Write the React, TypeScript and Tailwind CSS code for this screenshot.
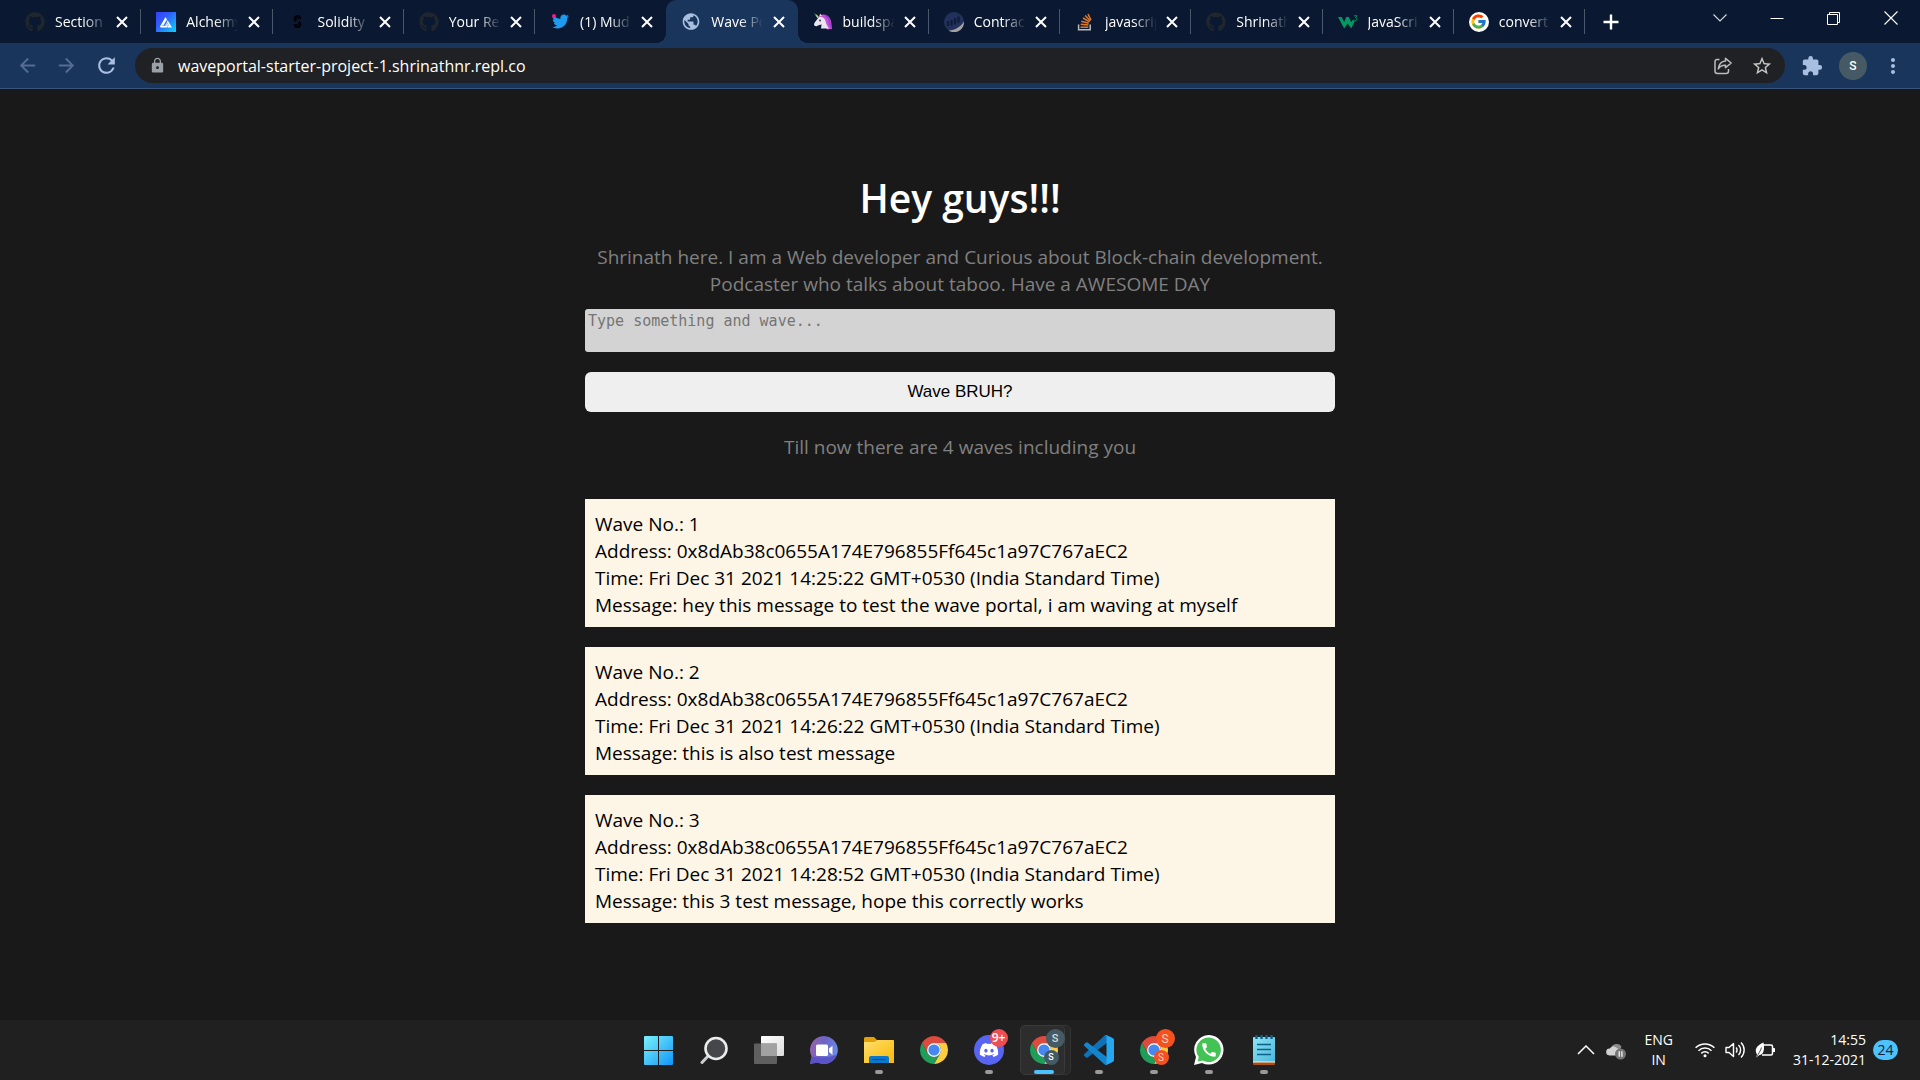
import React from 'react';
import { FaGithub, FaTwitter, FaDiscord } from 'react-icons/fa';
import { FcGoogle } from 'react-icons/fc';
import { SiSolidity } from 'react-icons/si';
import {
  MdArrowBack,
  MdArrowForward,
  MdCall,
  MdExtension,
  MdLock,
  MdMoreVert,
  MdPublic,
  MdRefresh,
  MdStarBorder,
} from 'react-icons/md';

/* ---------- Tab favicons ---------- */

const GithubMark = () => <FaGithub size={20} color="#1f262d" />;

const AlchemyMark = () => (
  <svg width="20" height="20" viewBox="0 0 20 20">
    <defs>
      <linearGradient id="alchemy" x1="0" y1="0" x2="1" y2="1">
        <stop offset="0" stopColor="#363ff9" />
        <stop offset="0.4" stopColor="#3060fb" />
        <stop offset="1" stopColor="#05d5ff" />
      </linearGradient>
    </defs>
    <rect width="20" height="20" fill="url(#alchemy)" />
    <path d="M9.500 5 11 7.400 7.300 13.600H5.800L4.500 15.300 4 14.500Z" fill="#fff" />
    <path d="M4.500 13.800h6.500v1.700H4.500Z" fill="#fff" />
    <path d="M11.600 8.200 16 15.500h-4.200l-1-1.700h2.200l-2.200-3.700Z" fill="#fff" />
    <path d="M10.800 10.500l1.900 3.200H8.900Z" fill="#dfe6ff" />
  </svg>
);

const UnicornMark = () => (
  <svg width="20" height="20" viewBox="0 0 20 20">
    <path d="M6.500 3.500C10 1.500 15 2.500 17 6.500c1.800 3.400 1.400 7 2 10.500l-5 .5-4-6L5 6Z" fill="#c94fd8" />
    <path d="M12 3.500c3 1 5 4.500 4.600 8l2 4" stroke="#8f3fd0" strokeWidth="1.400" fill="none" />
    <path d="M5.500 5.500C9 4 12 6 12.500 9c.4 3 2 5 3.500 7.500H8l.6-4C7 12.500 5.500 13 4 14c-1.500.6-3-.3-3-1.800C1.500 10 3.500 8.500 5.500 5.500Z" fill="#e9e6f0" />
    <path d="M1 1l4.800 4-1.300 1.500L1 1Z" fill="#35b4d8" />
    <path d="M2.500 2.800 3.600 2.600 5.800 5 4.700 6Z" fill="#f3c53b" />
    <path d="M7 1.500 9 4 6.500 4.500Z" fill="#e9e6f0" />
    <circle cx="7" cy="8.500" r="0.900" fill="#32233f" />
  </svg>
);

const EtherscanMark = () => (
  <svg width="20" height="20" viewBox="0 0 20 20">
    <circle cx="10" cy="10" r="10" fill="#22315c" />
    <path d="M4 9v5M7.500 8v5.500M11 6v6.500M14.500 4.500v6" stroke="#0d1d3a" strokeWidth="2.200" />
    <path d="M4.500 18.400C11 18.500 17 14.500 20 9.500c.3 6-4 10.500-10 10.500-2 0-4-.6-5.500-1.600Z" fill="#a3a3a3" />
  </svg>
);

const StackMark = () => (
  <svg width="20" height="20" viewBox="0 0 20 20">
    <path d="M3.600 12.500v5.200h11.600v-5.200" fill="none" stroke="#bcbbbb" strokeWidth="1.500" />
    <g stroke="#e07b28" strokeWidth="1.500">
      <path d="M5.500 15.200h7.800" />
      <path d="M5.700 12.200l7.700.9" />
      <path d="M6.300 9.200l7.400 2.100" />
      <path d="M8 6l6.500 3.900" />
      <path d="M10.200 3.600l5.200 5.500" />
      <path d="M13 2l3 6" />
    </g>
  </svg>
);

const SchoolMark = () => (
  <svg width="20" height="20" viewBox="0 0 20 20">
    <path d="M0 5h3.600l2.600 5L8.200 5h2.600l2.400 5.200L14.600 8l2.200 1-3.600 7.500L9.600 11.500 6.200 16.500Z" fill="#059862" />
    <path d="M16 3.800h3l-1.500 1.900c2 .2 2 2.900-.2 2.900-.8 0-1.300-.4-1.500-1" fill="none" stroke="#059862" strokeWidth="1" />
  </svg>
);

const GoogleMark = () => (
  <span className="flex size-5 items-center justify-center rounded-full bg-white">
    <FcGoogle size={17} />
  </span>
);

const TwitterMark = () => (
  <span className="relative flex size-5 items-center justify-center">
    <FaTwitter size={17} color="#1d9bf0" />
    <span className="absolute left-0.5 top-0.5 size-1 rounded-full bg-[#f91880]" />
  </span>
);

const tabs: { title: string; icon: React.ReactNode; active?: boolean; sep?: boolean }[] = [
  { title: 'Section', icon: <GithubMark />, sep: true },
  { title: 'Alchemy', icon: <AlchemyMark />, sep: true },
  { title: 'Solidity', icon: <SiSolidity size={13} color="#000" />, sep: true },
  { title: 'Your Rep', icon: <GithubMark />, sep: true },
  { title: '(1) Mud', icon: <TwitterMark /> },
  { title: 'Wave Po', icon: <MdPublic size={21} color="#a9bfe2" />, active: true },
  { title: 'buildspa', icon: <UnicornMark />, sep: true },
  { title: 'Contrac', icon: <EtherscanMark />, sep: true },
  { title: 'javascrip', icon: <StackMark />, sep: true },
  { title: 'Shrinath', icon: <GithubMark />, sep: true },
  { title: 'JavaScri', icon: <SchoolMark />, sep: true },
  { title: 'convert', icon: <GoogleMark />, sep: true },
];

const CloseMark = () => (
  <svg width="12" height="12" viewBox="0 0 12 12" stroke="#fff" strokeWidth="2">
    <path d="M1 1l10 10M11 1 1 11" />
  </svg>
);

function TabStrip() {
  return (
    <div className="flex h-[43px] bg-[#0a1931] pl-2.5">
      <div role="tablist" className="flex min-w-0 max-w-[1575px] flex-1">
        {tabs.map((t, i) => (
          <div
            key={i}
            role="tab"
            aria-selected={!!t.active}
            className={
              t.active
                ? 'relative flex flex-1 basis-0 items-center rounded-t-[10px] bg-[#1a355b] pl-[15px] pr-[13px]'
                : 'relative flex flex-1 basis-0 items-center pl-[15px] pr-[13px]'
            }
          >
            {t.active && (
              <>
                <span className="absolute -left-2.5 bottom-0 size-2.5 bg-[radial-gradient(circle_at_0_0,transparent_10px,#1a355b_10px)]" />
                <span className="absolute -right-2.5 bottom-0 size-2.5 bg-[radial-gradient(circle_at_100%_0,transparent_10px,#1a355b_10px)]" />
              </>
            )}
            <span className="flex size-5 shrink-0 items-center justify-center">{t.icon}</span>
            <span className="ml-2.5 w-[52px] overflow-hidden whitespace-nowrap text-[14px] leading-5 text-white [mask-image:linear-gradient(to_right,black_55%,transparent)]">
              {t.title}
            </span>
            <button aria-label={'Close ' + t.title} className="ml-auto">
              <CloseMark />
            </button>
            {t.sep && <span className="absolute right-0 top-[9px] h-[25px] w-px bg-[#4b586c]" />}
          </div>
        ))}
      </div>
      <button aria-label="New tab" className="ml-[18px] flex items-center">
        <svg width="16" height="16" viewBox="0 0 16 16" stroke="#fff" strokeWidth="2.400">
          <path d="M8 0.500v15M0.500 8h15" />
        </svg>
      </button>
      <div className="ml-auto flex h-9 items-center pr-px">
        <button aria-label="Search tabs" className="flex w-[57px] justify-center">
          <svg width="14" height="14" viewBox="0 0 14 14" fill="none" stroke="#d5dae2" strokeWidth="1.100">
            <path d="M0.500 3.500 7 10l6.500-6.500" />
          </svg>
        </button>
        <button aria-label="Minimize" className="flex w-[57px] justify-center">
          <svg width="14" height="14" viewBox="0 0 14 14" stroke="#fff">
            <path d="M0.500 7.500h13" />
          </svg>
        </button>
        <button aria-label="Restore" className="flex w-[57px] justify-center">
          <svg width="14" height="14" viewBox="0 0 14 14" fill="none" stroke="#fff">
            <path d="M0.500 3.500h10v10h-10zM2.500 3.500v-2h10v10h-2" />
          </svg>
        </button>
        <button aria-label="Close window" className="flex w-[57px] justify-center">
          <svg width="14" height="14" viewBox="0 0 14 14" stroke="#fff" strokeWidth="1.100">
            <path d="M0.500 0.500l13 13M13.500 0.500l-13 13" />
          </svg>
        </button>
      </div>
    </div>
  );
}

function Toolbar() {
  return (
    <div className="flex h-[46px] items-center border-b border-[#38547d] bg-[#1a355b] pl-4 pr-[15px]">
      <div className="flex gap-4">
        <button aria-label="Back"><MdArrowBack size={23} color="#546d94" /></button>
        <button aria-label="Forward"><MdArrowForward size={23} color="#546d94" /></button>
        <button aria-label="Reload"><MdRefresh size={25} color="#a9bfe2" /></button>
      </div>
      <div className="ml-4 flex h-[35px] flex-1 items-center rounded-full bg-[#202124] pl-3.5 pr-3">
        <MdLock size={17} color="#9aa0a6" />
        <input
          aria-label="Address"
          defaultValue="waveportal-starter-project-1.shrinathnr.repl.co"
          className="ml-3 h-full flex-1 bg-transparent text-[16px] text-white outline-none"
        />
        <button aria-label="Share">
          <svg width="20" height="20" viewBox="0 0 20 20" fill="none" stroke="#b9bcc0" strokeWidth="1.500" strokeLinejoin="round">
            <path d="M6.500 3.500H4a2 2 0 0 0-2 2V15a2.500 2.500 0 0 0 2.500 2.500H13a2.500 2.500 0 0 0 2.500-2.500v-2" />
            <path d="M12.500 2.300 18.200 7l-5.700 4.700V9.200C9.200 9 7 10.200 5.300 12.800 5.800 8.500 8.200 5.200 12.500 4.900Z" />
          </svg>
        </button>
        <button aria-label="Bookmark" className="ml-[18px]"><MdStarBorder size={22} color="#c4c7c5" /></button>
      </div>
      <button aria-label="Extensions" className="ml-4"><MdExtension size={22} color="#a9bfe2" /></button>
      <button
        aria-label="Profile"
        className='ml-4 flex size-7 items-center justify-center rounded-full bg-[#455a64] font-["Roboto",sans-serif] text-[12px] font-medium text-white'
      >
        S
      </button>
      <button aria-label="Menu" className="ml-3.5"><MdMoreVert size={24} color="#a9bfe2" /></button>
    </div>
  );
}

/* ---------- Page ---------- */

const ADDRESS = '0x8dAb38c0655A174E796855Ff645c1a97C767aEC2';
const waves = [
  { n: 1, time: 'Fri Dec 31 2021 14:25:22 GMT+0530 (India Standard Time)', msg: 'hey this message to test the wave portal, i am waving at myself' },
  { n: 2, time: 'Fri Dec 31 2021 14:26:22 GMT+0530 (India Standard Time)', msg: 'this is also test message' },
  { n: 3, time: 'Fri Dec 31 2021 14:28:52 GMT+0530 (India Standard Time)', msg: 'this 3 test message, hope this correctly works' },
];

function Page() {
  return (
    <main className="flex flex-1 justify-center bg-[#191919] pt-[82px] text-[19px] leading-[27px]">
      <div className="flex w-full max-w-[750px] flex-col">
        <h1 className="text-center text-[39px] font-semibold leading-[53px] text-white">Hey guys!!!</h1>
        <p className="mt-5 text-center text-[#808080]">
          Shrinath here. I am a Web developer and Curious about Block-chain development.
          <br />
          Podcaster who talks about taboo. Have a AWESOME DAY
        </p>
        <textarea
          aria-label="Message"
          placeholder="Type something and wave..."
          className='mt-[11px] h-[43px] resize-none rounded-[3px] bg-[#d3d3d3] px-[3px] py-0.5 font-["DejaVu_Sans_Mono",monospace] text-[15px] leading-5 text-black placeholder:text-[#757575]'
        />
        <button className='mt-5 h-10 rounded-md bg-[#efefef] pb-0.5 font-["Liberation_Sans",sans-serif] text-[17px] text-black'>
          Wave BRUH?
        </button>
        <p className="mt-[22px] text-center text-[#808080]">Till now there are 4 waves including you</p>
        <div className="mt-[38px] flex flex-col gap-5">
          {waves.map((w) => (
            <article key={w.n} className="bg-[#fdf5e6] px-2.5 pb-2 pt-3 text-black">
              <div>Wave No.: {w.n}</div>
              <div>Address: {ADDRESS}</div>
              <div>Time: {w.time}</div>
              <div>Message: {w.msg}</div>
            </article>
          ))}
        </div>
      </div>
    </main>
  );
}

/* ---------- Taskbar ---------- */

const Start = () => (
  <svg width="29" height="29" viewBox="0 0 29 29">
    <defs>
      <linearGradient id="win" x1="0" y1="0" x2="29" y2="29" gradientUnits="userSpaceOnUse">
        <stop offset="0" stopColor="#7bf0fd" />
        <stop offset="0.500" stopColor="#46c4f9" />
        <stop offset="1" stopColor="#0e95f8" />
      </linearGradient>
    </defs>
    <path d="M1 0h13v14H0V1a1 1 0 0 1 1-1ZM15 0h13a1 1 0 0 1 1 1v13H15ZM0 15h14v14H1a1 1 0 0 1-1-1ZM15 15h14v13a1 1 0 0 1-1 1H15Z" fill="url(#win)" />
  </svg>
);

const Search = () => (
  <svg width="28" height="29" viewBox="0 0 28 29">
    <path d="M9.500 18.500 2 26.500" stroke="#cdd0d3" strokeWidth="3" strokeLinecap="round" />
    <circle cx="16" cy="12.500" r="10.500" fill="#45474a" stroke="#ececec" strokeWidth="2.600" />
  </svg>
);

const TaskView = () => (
  <svg width="30" height="28" viewBox="0 0 30 28">
    <defs>
      <linearGradient id="tv" x1="0" y1="0" x2="1" y2="1">
        <stop offset="0" stopColor="#fff" />
        <stop offset="1" stopColor="#dcdcdc" />
      </linearGradient>
    </defs>
    <rect x="7" width="23" height="20" rx="1" fill="url(#tv)" />
    <rect y="7.500" width="23" height="20.500" rx="1" fill="#6b6b6b" opacity="0.850" />
    <rect x="7" y="7.500" width="16" height="12.500" fill="#a2a2a2" />
  </svg>
);

const Chat = () => (
  <svg width="28" height="28" viewBox="0 0 28 28">
    <defs>
      <linearGradient id="chat" x1="0" y1="0.200" x2="1" y2="0.500">
        <stop offset="0" stopColor="#9a62a8" />
        <stop offset="0.500" stopColor="#6a64c8" />
        <stop offset="1" stopColor="#6a8ce6" />
      </linearGradient>
    </defs>
    <path d="M14 0a14 14 0 1 1-6.500 26.500L0 28l1.600-7.500A14 14 0 0 1 14 0Z" fill="url(#chat)" />
    <path d="M1.600 20.500C8 22 20 22 27 18.500A14 14 0 0 1 7.500 26.500L0 28Z" fill="#5a53c6" />
    <rect x="6" y="8.500" width="12" height="11.500" rx="1.500" fill="#fff" />
    <path d="M19 12.500l3.500-2.800v9L19 16Z" fill="#fff" />
  </svg>
);

const Folder = () => (
  <svg width="30" height="28" viewBox="0 0 30 28">
    <defs>
      <linearGradient id="fold" x1="0" y1="0" x2="1" y2="1">
        <stop offset="0" stopColor="#ffdf70" />
        <stop offset="1" stopColor="#f9b900" />
      </linearGradient>
    </defs>
    <path d="M0 2.500A1.500 1.500 0 0 1 1.500 1H10l3 3h15.500A1.500 1.500 0 0 1 30 5.500V10H0Z" fill="#e2a10b" />
    <path d="M0 6h10.500L13.500 4H29a1 1 0 0 1 1 1v22H0Z" fill="url(#fold)" />
    <path d="M5 27v-5a2 2 0 0 1 2-2h16a2 2 0 0 1 2 2v5Z" fill="#0a78cf" />
    <path d="M8.500 23.500h13" stroke="#064f8f" strokeWidth="1.200" />
  </svg>
);

const Chrome = () => (
  <svg width="28" height="28" viewBox="0 0 48 48">
    <path d="M24 12h20.780A24 24 0 0 0 3.220 12l10.390 18A12 12 0 0 1 24 12Z" fill="#dd4b3e" />
    <path d="M34.390 30 24 48a24 24 0 0 0 20.780-36H24a12 12 0 0 1 10.390 18Z" fill="#fdcd40" />
    <path d="M13.610 30 3.220 12A24 24 0 0 0 24 48l10.390-18a12 12 0 0 1-20.780 0Z" fill="#1d9f5a" />
    <circle cx="24" cy="24" r="12" fill="#f4f4f4" />
    <circle cx="24" cy="24" r="9.600" fill="#4688f1" />
  </svg>
);

const Discord = () => (
  <span className="relative flex size-[30px] items-center justify-center rounded-full bg-[#5865f2]">
    <FaDiscord size={20} color="#fff" />
    <span className="absolute -right-1 -top-1.5 flex size-[18px] items-center justify-center rounded-full bg-[#ed4d53] text-[12px] font-semibold leading-none text-white">
      9+
    </span>
  </span>
);

const ProfileChrome = () => (
  <span className="relative flex">
    <Chrome />
    <span className="absolute -right-[7px] -top-[7px] flex size-[19px] items-center justify-center rounded-full bg-[#455a64] font-['Roboto',sans-serif] text-[11px] font-medium leading-none text-[#d3dade]">
      S
    </span>
    <span className="absolute -bottom-px -right-px flex size-[15px] items-center justify-center rounded-full bg-[#455a64] font-['Roboto',sans-serif] text-[9px] font-medium leading-none text-white">
      S
    </span>
  </span>
);

const OrangeChrome = () => (
  <span className="relative flex">
    <Chrome />
    <span className="absolute -right-[7px] -top-[7px] flex size-[19px] items-center justify-center rounded-full bg-[#f4511e] font-['Roboto',sans-serif] text-[12px] leading-none text-[#ffd0c0]">
      S
    </span>
    <span className="absolute -bottom-px -right-px flex size-[15px] items-center justify-center rounded-full bg-[#f4511e] font-['Roboto',sans-serif] text-[10px] leading-none text-[#ffd0c0]">
      S
    </span>
  </span>
);

const Code = () => (
  <svg width="30" height="30" viewBox="0 0 100 100">
    <path d="M96.461 10.796 75.857.876A8.500 8.500 0 0 0 68.750 2.083L1.299 63.583a4.170 4.170 0 0 0 .004 6.162l5.510 5.009a4.170 4.170 0 0 0 5.321.237L93.361 13.370C96.086 11.303 100 13.246 100 16.667v-.24a6.250 6.250 0 0 0-3.539-5.631Z" fill="#0f72b8" />
    <path d="M96.461 89.204 75.857 99.124a8.500 8.500 0 0 1-7.107-1.207L1.299 36.417a4.170 4.170 0 0 1 .004-6.162l5.510-5.009a4.170 4.170 0 0 1 5.321-.237L93.361 86.630C96.086 88.697 100 86.754 100 83.333v.24a6.250 6.250 0 0 1-3.539 5.631Z" fill="#1484cd" />
    <path d="M75.858 99.126A8.500 8.500 0 0 1 68.750 97.917C71.056 100.223 75 98.590 75 95.328V4.672C75 1.410 71.056-.223 68.750 2.083A8.500 8.500 0 0 1 75.858.874l20.601 9.907A6.250 6.250 0 0 1 100 16.413v67.174a6.250 6.250 0 0 1-3.541 5.633Z" fill="#25a8f0" />
  </svg>
);

const WhatsApp = () => (
  <span className="relative flex size-[30px] items-center justify-center">
    <svg width="30" height="30" viewBox="0 0 30 30" className="absolute inset-0">
      <path d="M15 0a14.800 14.800 0 1 1-7 28L0 30l2-8A14.800 14.800 0 0 1 15 0Z" fill="#fff" />
      <path d="M15 2.500a12.300 12.300 0 1 1-6.500 23L3.700 26.500 4.800 22A12.300 12.300 0 0 1 15 2.500Z" fill="#43c353" />
    </svg>
    <span className="relative flex"><MdCall size={18} color="#fff" /></span>
  </span>
);

const Notepad = () => (
  <svg width="22" height="30" viewBox="0 0 22 30">
    <defs>
      <linearGradient id="note" x1="0" y1="0" x2="1" y2="1">
        <stop offset="0" stopColor="#8fe3f5" />
        <stop offset="1" stopColor="#4bb9dc" />
      </linearGradient>
    </defs>
    <path d="M0 26h22v3a1 1 0 0 1-1 1H1a1 1 0 0 1-1-1Z" fill="#a8500c" />
    <path d="M0 26h22v1.500H0Z" fill="#f3f3f3" />
    <rect y="2" width="22" height="24.500" rx="1" fill="url(#note)" />
    <path d="M3.500 0v4M8.500 0v4M13.500 0v4M18.500 0v4" stroke="#0c5f86" strokeWidth="2.400" />
    <path d="M4 9.500h14M4 14.500h14M4 19.500h14" stroke="#0d6089" strokeWidth="1.600" />
  </svg>
);

const apps: { name: string; icon: React.ReactNode; open?: boolean; active?: boolean }[] = [
  { name: 'Start', icon: <Start /> },
  { name: 'Search', icon: <Search /> },
  { name: 'Task view', icon: <TaskView /> },
  { name: 'Chat', icon: <Chat /> },
  { name: 'File Explorer', icon: <Folder />, open: true },
  { name: 'Google Chrome', icon: <Chrome /> },
  { name: 'Discord', icon: <Discord />, open: true },
  { name: 'Chrome profile', icon: <ProfileChrome />, active: true },
  { name: 'Visual Studio Code', icon: <Code />, open: true },
  { name: 'Chrome second profile', icon: <OrangeChrome />, open: true },
  { name: 'WhatsApp', icon: <WhatsApp />, open: true },
  { name: 'Notepad', icon: <Notepad />, open: true },
];

function Taskbar() {
  return (
    <footer className="grid h-[60px] grid-cols-[1fr_auto_1fr] items-center bg-[#202020] text-white">
      <div />
      <nav className="flex h-full items-center pl-0.5">
        {apps.map((a) => (
          <button
            key={a.name}
            aria-label={a.name}
            className="relative flex h-[50px] w-[55px] items-center justify-center"
          >
            {a.active && (
              <>
                <span className="absolute inset-y-0 left-2 right-0 rounded-[5px] border border-[#343434] bg-[#282828]" />
                <span className="absolute inset-y-0 left-1 right-1.5 rounded-[5px] border border-[#3a3a3a] bg-[#2d2d2d]" />
              </>
            )}
            <span className="relative flex">{a.icon}</span>
            {a.open && <span className="absolute bottom-px left-6 h-1 w-2 rounded-full bg-[#9a9a9a]" />}
            {a.active && <span className="absolute bottom-px left-[18px] h-1 w-5 rounded-full bg-[#4cc2ff]" />}
          </button>
        ))}
      </nav>
      <div className="flex items-center justify-end pr-[22px] text-[14px] leading-5">
        <button aria-label="Show hidden icons">
          <svg width="18" height="10" viewBox="0 0 18 10" fill="none" stroke="#fff" strokeWidth="1.500">
            <path d="M1 9l8-8 8 8" />
          </svg>
        </button>
        <button aria-label="OneDrive" className="ml-[11px]">
          <svg width="20" height="20" viewBox="0 0 20 20">
            <path d="M5 8a6 6 0 0 1 10.500-1.500L13 12H6Z" fill="#8b8b8b" />
            <path d="M3.500 15.500a3.500 3.500 0 0 1 .3-7C5.500 5.500 9 6 11 8l5 3.500v4Z" fill="#d2d2d2" />
            <circle cx="14.500" cy="14" r="5.500" fill="#757575" />
            <path d="M13.200 11.200v5.600M15.900 11.200v5.600" stroke="#fff" strokeWidth="1.200" />
          </svg>
        </button>
        <button className="ml-[18px] text-center">
          ENG
          <br />
          IN
        </button>
        <button aria-label="Network, volume and battery" className="ml-[22px] flex items-center gap-2.5">
          <svg width="20" height="16" viewBox="0 0 20 16" fill="none" stroke="#fff" strokeWidth="1.500">
            <path d="M0.600 5.800a13.300 13.300 0 0 1 18.800 0M3.500 8.700a9.200 9.200 0 0 1 13 0M6.300 11.400a5.200 5.200 0 0 1 7.400 0" />
            <circle cx="10" cy="13.800" r="1.500" fill="#fff" stroke="none" />
          </svg>
          <svg width="20" height="18" viewBox="0 0 20 18" fill="none" stroke="#fff" strokeWidth="1.400" strokeLinejoin="round">
            <path d="M1 6.500h3L8.500 2.500v13L4 11.500H1Z" />
            <path d="M11 6.500a3.500 3.500 0 0 1 0 5M13.500 4a7 7 0 0 1 0 10M16 1.500a10.500 10.500 0 0 1 0 15" />
          </svg>
          <svg width="20" height="16" viewBox="0 0 20 16">
            <path d="M8 3h8a1.500 1.500 0 0 1 1.500 1.500v7A1.500 1.500 0 0 1 16 13H7" fill="none" stroke="#fff" strokeWidth="1.500" />
            <path d="M18 6h1.500a.5.5 0 0 1 .5.5v3a.5.5 0 0 1-.5.5H18Z" fill="#fff" />
            <path d="M8.500.5C9.500 5 9.500 12.500 4.500 13L1 15.500l1-3C-1 8 1.500 3.500 8.500.5Z" fill="#fff" />
            <path d="M1.500 14.500C3.500 12 5.500 9 6.500 5.500" stroke="#202020" strokeWidth="0.800" fill="none" />
          </svg>
        </button>
        <button className="ml-[18px] text-right">
          14:55
          <br />
          31-12-2021
        </button>
        <span className="ml-[7px] flex h-5 min-w-[25px] items-center justify-center rounded-full bg-[#4cc2ff] text-[14px] leading-none text-[#10202b]">
          24
        </span>
      </div>
    </footer>
  );
}

export default function App() {
  return (
    <div className='flex min-h-screen flex-col bg-[#191919] font-["Open_Sans","Noto_Sans",sans-serif]'>
      <header>
        <TabStrip />
        <Toolbar />
      </header>
      <Page />
      <Taskbar />
    </div>
  );
}
